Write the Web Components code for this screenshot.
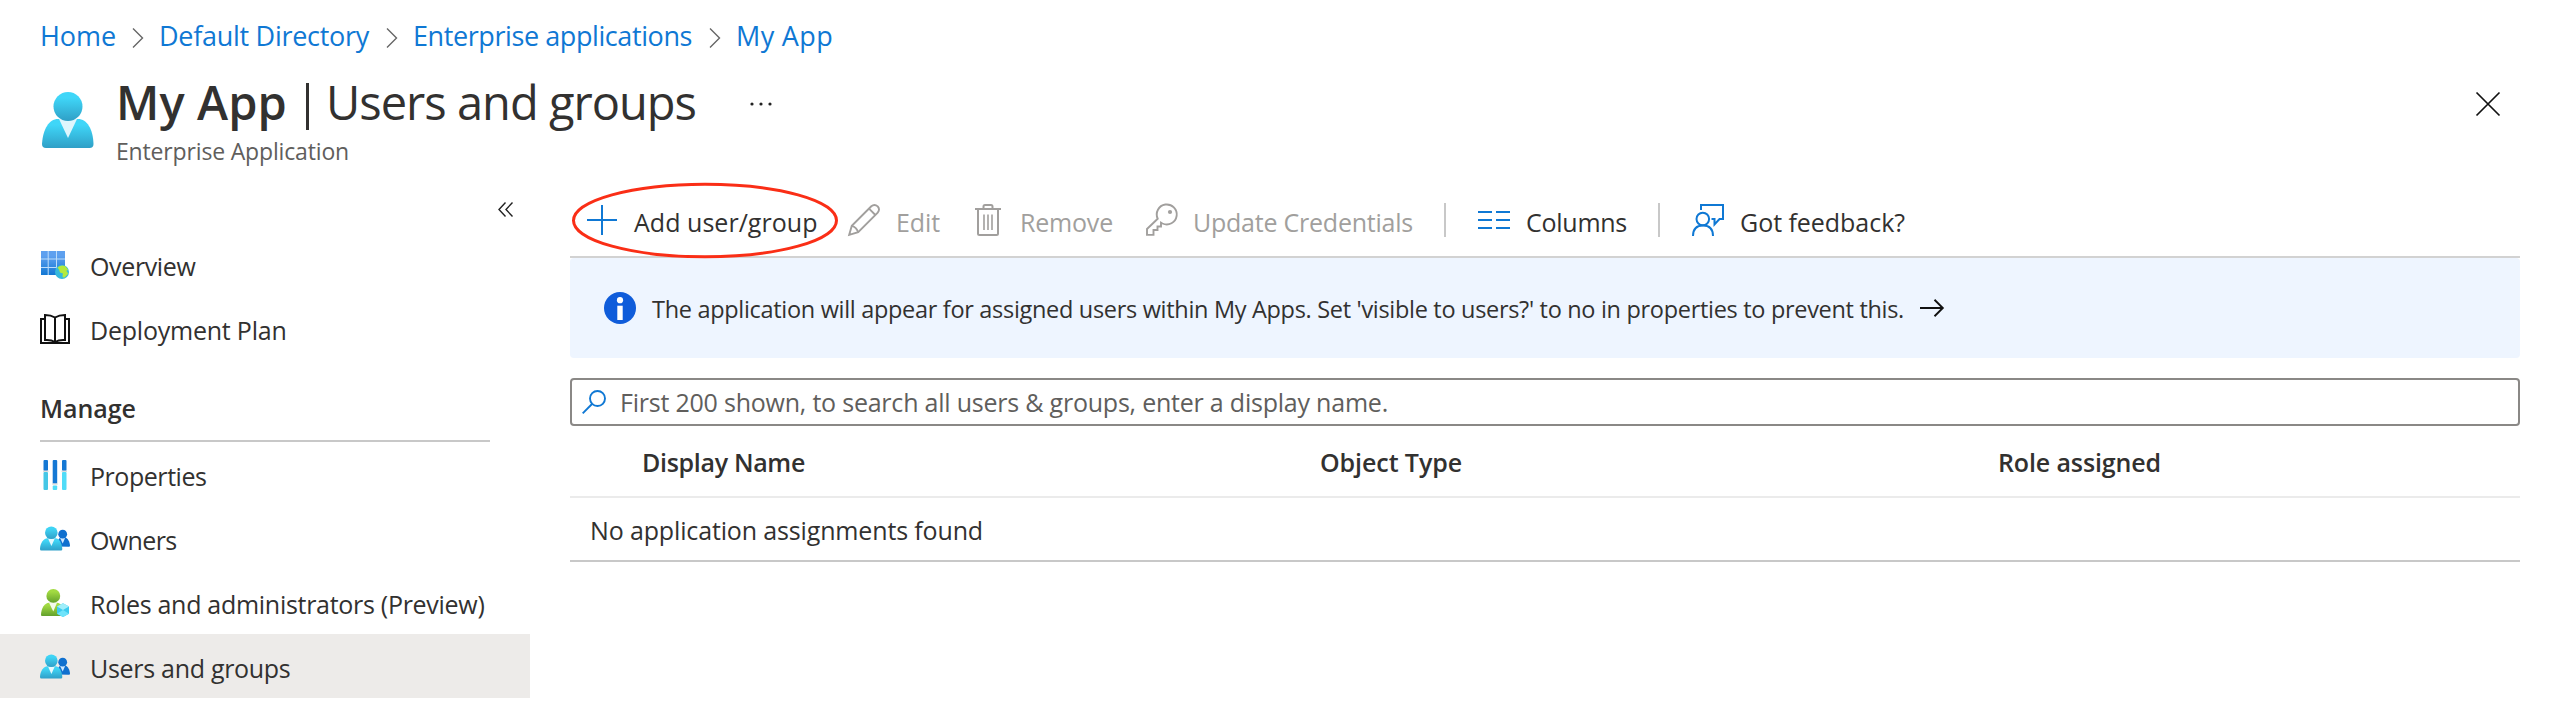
<!DOCTYPE html>
<html lang="en">
<head>
<meta charset="utf-8">
<title>My App | Users and groups</title>
<style>
html, body { margin: 0; padding: 0; background: #fff; }
body { font-family: "Open Sans", "Noto Sans", sans-serif; color: #323130; height: 714px; overflow: hidden; }
</style>
</head>
<body>
<app-blade></app-blade>
<script>
/* Single-line label: spacing is tuned so the run spans exactly `w` pixels. */
class UiText extends HTMLElement {
  connectedCallback() {
    const root = this.attachShadow({ mode: 'open' });
    root.innerHTML = `<style>
      :host { display: block; white-space: nowrap; flex: none; line-height: 36px; font-size: 25px; }
      span { display: inline-block; }
    </style><span><slot></slot></span>`;
    const w = parseFloat(this.getAttribute('w'));
    const span = root.querySelector('span');
    const n = this.textContent.length;
    if (w && n > 1) {
      const natural = span.getBoundingClientRect().width;
      span.style.letterSpacing = ((w - natural) / n) + 'px';
      this.style.width = w + 'px';
    }
  }
}
customElements.define('ui-text', UiText);

const fade = (id, a, b) => `<linearGradient id="${id}" x1="0" y1="0" x2="0" y2="1"><stop offset="0.2" stop-color="${a}"/><stop offset="1" stop-color="${b}"/></linearGradient>`;
const ICONS = {
  person: `<svg width="52" height="56" viewBox="0 0 52 56"><defs>${fade('p', '#3fd6f8', '#2f9fc6')}</defs>
    <path d="M0 52C1 37 7 27 16 27H36C45 27 51 37 51.500 52Q51.500 56 47.500 56H4Q0 56 0 52Z" fill="url(#p)"/><path d="M17 27H35L26 46Z" fill="#dff6fd"/><circle cx="26" cy="14.500" r="14.500" fill="url(#p)"/></svg>`,
  chevron: `<svg width="12" height="20" viewBox="0 0 12 20"><path d="M1 .5L10.500 10L1 19.500" fill="none" stroke="#666" stroke-width="1.400"/></svg>`,
  dots: `<svg width="22" height="4" viewBox="0 0 22 4"><g fill="#222"><circle cx="2" cy="2" r="1.600"/><circle cx="11" cy="2" r="1.600"/><circle cx="20" cy="2" r="1.600"/></g></svg>`,
  close: `<svg width="24" height="24" viewBox="0 0 24 24"><path d="M.5 .5L23.500 23.500M23.500 .5L.5 23.500" stroke="#111" stroke-width="1.700"/></svg>`,
  collapse: `<svg width="16" height="15" viewBox="0 0 16 15"><path d="M7.500 .5L1 7.500L7.500 14.500M14.500 .5L8 7.500L14.500 14.500" fill="none" stroke="#222" stroke-width="1.400"/></svg>`,
  overview: `<svg width="30" height="30" viewBox="0 0 30 30"><defs><linearGradient id="o" gradientUnits="userSpaceOnUse" x1="0" y1="1" x2="0" y2="25"><stop offset="0.2" stop-color="#5ea0ef"/><stop offset="1" stop-color="#1277d3"/></linearGradient>${fade('e', '#35b8dc', '#35b8dc')}</defs>
    <rect x="1" y="1" width="24" height="24" fill="#bcdcfa"/>
    <path d="M1 1H7.700V8.500H1ZM8.700 1H16V8.500H8.700ZM17 1H25V8.500H17ZM1 9.500H7.700V17H1ZM8.700 9.500H16V17H8.700ZM17 9.500H25V17H17ZM1 18H7.700V25H1ZM8.700 18H16V25H8.700ZM17 18H25V25H17Z" fill="url(#o)"/>
    <circle cx="22" cy="22" r="7" fill="#35b8dc"/><path d="M17.500 17.500Q21 14.500 25.500 16.200L28 19.500Q27.500 21 26 20.500Q28 22 28 24L24.500 27.500Q22.500 28 22.500 26L23 23.500L20 22.500L19 19.500Z" fill="#b4ea3c"/></svg>`,
  book: `<svg width="30" height="30" viewBox="0 0 30 30"><g fill="none" stroke="#111" stroke-width="2"><path d="M4 5H1V29H29V5H26"/><path d="M15 3.500Q11 1 5 1V26Q11 25.500 15 28Q19 25.500 25 26V1Q19 1 15 3.500V28"/></g></svg>`,
  properties: `<svg width="30" height="30" viewBox="0 0 30 30"><g fill="#1478d4"><rect x="3.500" width="4.500" height="11" rx="1"/><rect x="12.700" width="4.500" height="24" rx="1"/><rect x="22" width="4.500" height="11" rx="1"/></g><g fill="#50dcf8"><rect x="3.500" y="12" width="4.500" height="18" rx="1" fill="#45c7e6"/><rect x="12.700" y="25.500" width="4.500" height="4.500" rx="1"/><rect x="22" y="12" width="4.500" height="18" rx="1"/></g><path d="M3 11.200H8.500M12.200 24H17.700M21.500 11.200H27" stroke="#ddd" stroke-width="1.400"/></svg>`,
  group: `<svg width="30" height="26" viewBox="0 0 30 26"><defs>${fade('g', '#3fd4f5', '#2e9fc8')}</defs>
    <path d="M17 20.500C17 15 19 11.500 21 11.500H25C28 12 29.700 16 30 19.500Q30 20.700 29 20.700Z" fill="#1070cf"/><path d="M20 11.800H25.200L22.700 17.500Z" fill="#cfe8ff"/><circle cx="22.700" cy="8.200" r="4.400" fill="#1070cf"/>
    <path d="M0 23C0 17 4 12.300 7.500 12.300H15.500C19 12.300 22 17 22.300 23Q22.300 24.500 21 24.500H1.300Q0 24.500 0 23Z" fill="url(#g)"/><path d="M8 12.500H14.800L11.400 20Z" fill="#e6f8fd"/><circle cx="11.300" cy="6.700" r="6.300" fill="url(#g)"/></svg>`,
  roles: `<svg width="30" height="30" viewBox="0 0 30 30"><defs>${fade('r', '#a2da42', '#63a02c')}</defs>
    <path d="M1 27C1 20 5 14.700 9 14.700H17C21 14.700 24 20 24 27Q24 28 23 28H2Q1 28 1 27Z" fill="url(#r)"/><path d="M9 14.800H17L13.300 23.500Z" fill="#f2faea"/><circle cx="13.300" cy="7.900" r="6.900" fill="url(#r)"/>
    <path d="M23 15.200L29 18.500V25.700L23 29L17 25.700V18.500Z" fill="#3ccbee"/><path d="M23 15.200L29 18.500L23 22L17 18.500Z" fill="#a0eefa"/><path d="M23 22L29 25.700L23 29L17 25.700Z" fill="#6fe3fa"/></svg>`,
  plus: `<svg width="32" height="32" viewBox="0 0 32 32"><path d="M16 1V31M1 16H31" stroke="#0f78d4" stroke-width="2"/></svg>`,
  pencil: `<svg width="32" height="32" viewBox="0 0 32 32"><g fill="none" stroke="#a19f9d" stroke-width="1.900"><path d="M1.200 30.800L3.800 21.800L23.300 2.300Q26.500 -.4 29.700 2.400Q32.300 5.500 29.700 8.700L10.200 28.200Z"/><path d="M3.800 21.800Q8.500 23 10.200 28.200M21 4.600L27.400 11"/></g></svg>`,
  trash: `<svg width="26" height="32" viewBox="0 0 26 32"><g fill="none" stroke="#a19f9d" stroke-width="2"><path d="M0 5H26M8.500 5V2.500Q8.500 1 10 1H16Q17.500 1 17.500 2.500V5M3 5V29.500Q3 31 4.500 31H21.500Q23 31 23 29.500V5"/><path d="M9 10.500V26M13 10.500V26M17 10.500V26" stroke-width="1.600"/></g></svg>`,
  key: `<svg width="32" height="32" viewBox="0 0 32 32"><path d="M11.700 14.700A10 10 0 1 1 16.500 19.500L15 18.700V22.500H11.500V26H7.500V30.900H1V25L11.700 14.700Z" fill="none" stroke="#a19f9d" stroke-width="1.900"/><circle cx="24" cy="8" r="2.100" fill="#a19f9d"/></svg>`,
  columns: `<svg width="32" height="18" viewBox="0 0 32 18"><path d="M0 1H14M18 1H32M0 9H14M18 9H32M0 17H14M18 17H32" stroke="#0f78d4" stroke-width="2"/></svg>`,
  feedback: `<svg width="32" height="32" viewBox="0 0 32 32"><g fill="none" stroke="#0f78d4" stroke-width="2"><circle cx="10.800" cy="15" r="6.300"/><path d="M1 32Q1 21.500 11 21.500T21 32M9 6V1H31V15H27.500L22.500 20.500V15H19.500"/></g></svg>`,
  info: `<svg width="32" height="32" viewBox="0 0 32 32"><circle cx="16" cy="16" r="16" fill="#0f5cda"/><circle cx="16" cy="8.200" r="3.100" fill="#fff"/><rect x="13.300" y="13.700" width="5.400" height="14.300" fill="#fff"/></svg>`,
  arrow: `<svg width="24" height="18" viewBox="0 0 24 18"><path d="M0 9H23M14.500 .8L22.800 9L14.500 17.200" fill="none" stroke="#111" stroke-width="1.900"/></svg>`,
  search: `<svg width="24" height="24" viewBox="0 0 24 24"><circle cx="15.500" cy="8.500" r="7.500" fill="none" stroke="#0f78d4" stroke-width="1.900"/><path d="M10 14L.7 23.300" stroke="#0f78d4" stroke-width="1.900"/></svg>`
};

class UiIcon extends HTMLElement {
  connectedCallback() {
    this.attachShadow({ mode: 'open' }).innerHTML =
      `<style>:host{display:block;flex:none}svg{display:block;overflow:visible}</style>${ICONS[this.getAttribute('name')]}`;
  }
}
customElements.define('ui-icon', UiIcon);

class BladeCrumbs extends HTMLElement {
  connectedCallback() {
    this.attachShadow({ mode: 'open' }).innerHTML = `<style>
      :host { display: flex; align-items: center; height: 72px; padding-left: 40px; color: #0f78d4; }
      ui-text { font-size: 27px; }
      ui-icon { margin: 4px 15px 0 16px; }
    </style>
    <ui-text w="76">Home</ui-text><ui-icon name="chevron"></ui-icon>
    <ui-text w="210">Default Directory</ui-text><ui-icon name="chevron" style="margin-left:17px"></ui-icon>
    <ui-text w="279">Enterprise applications</ui-text><ui-icon name="chevron" style="margin-left:17px"></ui-icon>
    <ui-text w="97">My App</ui-text>`;
  }
}
customElements.define('blade-crumbs', BladeCrumbs);

class BladeHeader extends HTMLElement {
  connectedCallback() {
    this.attachShadow({ mode: 'open' }).innerHTML = `<style>
      :host { display: flex; height: 110px; padding: 0 58px 0 42px; }
      .person { margin-top: 20px; }
      .titles { margin-left: 22px; flex: 1; }
      h1 { margin: 0; display: flex; font-weight: 400; height: 62px; }
      h1 ui-text { font-size: 47px; line-height: 61px; }
      .name { font-weight: 600; }
      .bar { width: 3px; height: 47px; background: #323130; margin: 11px 17px 0 19px; }
      .dots { margin: 30px 0 0 54px; }
      .sub { color: #605e5c; font-size: 23px; line-height: 32px; margin-top: 1px; }
      .close { margin-top: 20px; }
    </style>
    <ui-icon class="person" name="person"></ui-icon>
    <div class="titles">
      <h1><ui-text class="name" w="171">My App</ui-text><div class="bar"></div><ui-text w="370">Users and groups</ui-text><ui-icon class="dots" name="dots"></ui-icon></h1>
      <ui-text class="sub" w="233">Enterprise Application</ui-text>
    </div>
    <ui-icon class="close" name="close"></ui-icon>`;
  }
}
customElements.define('blade-header', BladeHeader);

class NavItem extends HTMLElement {
  connectedCallback() {
    this.attachShadow({ mode: 'open' }).innerHTML = `<style>
      :host { display: flex; height: 64px; box-sizing: border-box; padding-left: 40px; }
      :host([selected]) { background: #edebe9; }
      ui-icon { width: 30px; margin-top: ${this.getAttribute('top')}px; }
      ui-text { margin: 16px 0 0 20px; }
    </style><ui-icon name="${this.getAttribute('icon')}"></ui-icon><ui-text w="${this.getAttribute('w')}">${this.getAttribute('label')}</ui-text>`;
  }
}
customElements.define('nav-item', NavItem);

class SideMenu extends HTMLElement {
  connectedCallback() {
    this.attachShadow({ mode: 'open' }).innerHTML = `<style>
      :host { display: block; width: 530px; }
      .top { height: 50px; display: flex; justify-content: flex-end; padding: 20px 16px 0 0; box-sizing: border-box; }
      .head { box-sizing: border-box; height: 82px; margin: 0 40px; border-bottom: 2px solid #c8c8c8; padding-top: 30px; font-weight: 600; }
    </style>
    <div class="top"><ui-icon name="collapse"></ui-icon></div>
    <nav-item icon="overview" top="18" w="105.500" label="Overview"></nav-item>
    <nav-item icon="book" top="18" w="196.500" label="Deployment Plan"></nav-item>
    <div class="head"><ui-text w="96">Manage</ui-text></div>
    <nav-item icon="properties" top="18" w="116.500" label="Properties"></nav-item>
    <nav-item icon="group" top="20" w="86.500" label="Owners"></nav-item>
    <nav-item icon="roles" top="18" w="394.500" label="Roles and administrators (Preview)"></nav-item>
    <nav-item selected icon="group" top="20" w="200.500" label="Users and groups"></nav-item>`;
  }
}
customElements.define('side-menu', SideMenu);

class ToolCommand extends HTMLElement {
  connectedCallback() {
    this.attachShadow({ mode: 'open' }).innerHTML = `<style>
      :host { display: flex; align-items: center; gap: 16px; flex: none; position: relative; }
      :host([disabled]) { color: #a19f9d; }
      ui-text { padding-top: 3px; }
      .ring { position: absolute; left: -15px; top: -1px; }
    </style><ui-icon name="${this.getAttribute('icon')}"></ui-icon><ui-text w="${this.getAttribute('w')}">${this.getAttribute('label')}</ui-text>
    ${this.hasAttribute('ringed') ? '<svg class="ring" width="268" height="78" viewBox="0 0 268 78"><ellipse cx="134" cy="39.500" rx="131.500" ry="36.300" fill="none" stroke="#fa2e16" stroke-width="3"/></svg>' : ''}`;
  }
}
customElements.define('tool-command', ToolCommand);

class CommandBar extends HTMLElement {
  connectedCallback() {
    this.attachShadow({ mode: 'open' }).innerHTML = `<style>
      :host { display: flex; height: 74px; border-bottom: 2px solid #d2d2d2; padding-left: 16px; position: relative; z-index: 1; }
      i { width: 2px; height: 34px; background: #c8c8c8; align-self: center; flex: none; margin-top: 2px; }
      tool-command { height: 76px; }
    </style>
    <tool-command ringed icon="plus" w="183.500" label="Add user/group"></tool-command>
    <tool-command disabled icon="pencil" w="44" style="margin-left:30.500px" label="Edit"></tool-command>
    <tool-command disabled icon="trash" w="93" style="margin-left:35px;gap:19px" label="Remove"></tool-command>
    <tool-command disabled icon="key" w="220" style="margin-left:33px;gap:15px" label="Update Credentials"></tool-command>
    <i style="margin-left:31px"></i>
    <tool-command icon="columns" w="101" style="margin-left:32px" label="Columns"></tool-command>
    <i style="margin-left:31px"></i>
    <tool-command icon="feedback" w="165" style="margin-left:32px" label="Got feedback?"></tool-command>`;
  }
}
customElements.define('command-bar', CommandBar);

class InfoBanner extends HTMLElement {
  connectedCallback() {
    this.attachShadow({ mode: 'open' }).innerHTML = `<style>
      :host { display: flex; align-items: center; height: 100px; background: #eef5ff; border-radius: 4px; padding-left: 34px; }
      ui-text { font-size: 23.500px; margin: 2px 16px 0 16px; }
    </style><ui-icon name="info"></ui-icon>
    <ui-text w="1252">The application will appear for assigned users within My Apps. Set 'visible to users?' to no in properties to prevent this.</ui-text>
    <ui-icon name="arrow"></ui-icon>`;
  }
}
customElements.define('info-banner', InfoBanner);

class SearchField extends HTMLElement {
  connectedCallback() {
    this.attachShadow({ mode: 'open' }).innerHTML = `<style>
      :host { display: flex; align-items: center; height: 48px; box-sizing: border-box; border: 2px solid #8a8886; border-radius: 4px; margin-top: 20px; padding-left: 10px; color: #605e5c; }
      ui-text { margin: 0 0 0 14px; }
    </style><ui-icon name="search"></ui-icon>
    <ui-text w="768">First 200 shown, to search all users &amp; groups, enter a display name.</ui-text>`;
  }
}
customElements.define('search-field', SearchField);

class AssignmentTable extends HTMLElement {
  connectedCallback() {
    this.attachShadow({ mode: 'open' }).innerHTML = `<style>
      :host { display: block; }
      .head { display: grid; grid-template-columns: 678px 678px 1fr; height: 72px; padding-left: 72px; box-sizing: border-box; border-bottom: 2px solid #ebebeb; font-weight: 600; }
      .head ui-text { padding-top: 18px; }
      .row { height: 64px; box-sizing: border-box; border-bottom: 2px solid #c8c8c8; padding: 14px 0 0 20px; }
    </style>
    <div class="head"><ui-text w="163">Display Name</ui-text><ui-text w="142">Object Type</ui-text><ui-text w="163">Role assigned</ui-text></div>
    <div class="row"><ui-text w="393">No application assignments found</ui-text></div>`;
  }
}
customElements.define('assignment-table', AssignmentTable);

class AppBlade extends HTMLElement {
  connectedCallback() {
    this.attachShadow({ mode: 'open' }).innerHTML = `<style>
      :host { display: block; }
      .body { display: grid; grid-template-columns: 530px 1950px; column-gap: 40px; }
    </style>
    <blade-crumbs></blade-crumbs>
    <blade-header></blade-header>
    <div class="body">
      <side-menu></side-menu>
      <main><command-bar></command-bar><info-banner></info-banner><search-field></search-field><assignment-table></assignment-table></main>
    </div>`;
  }
}
customElements.define('app-blade', AppBlade);
</script>
</body>
</html>
